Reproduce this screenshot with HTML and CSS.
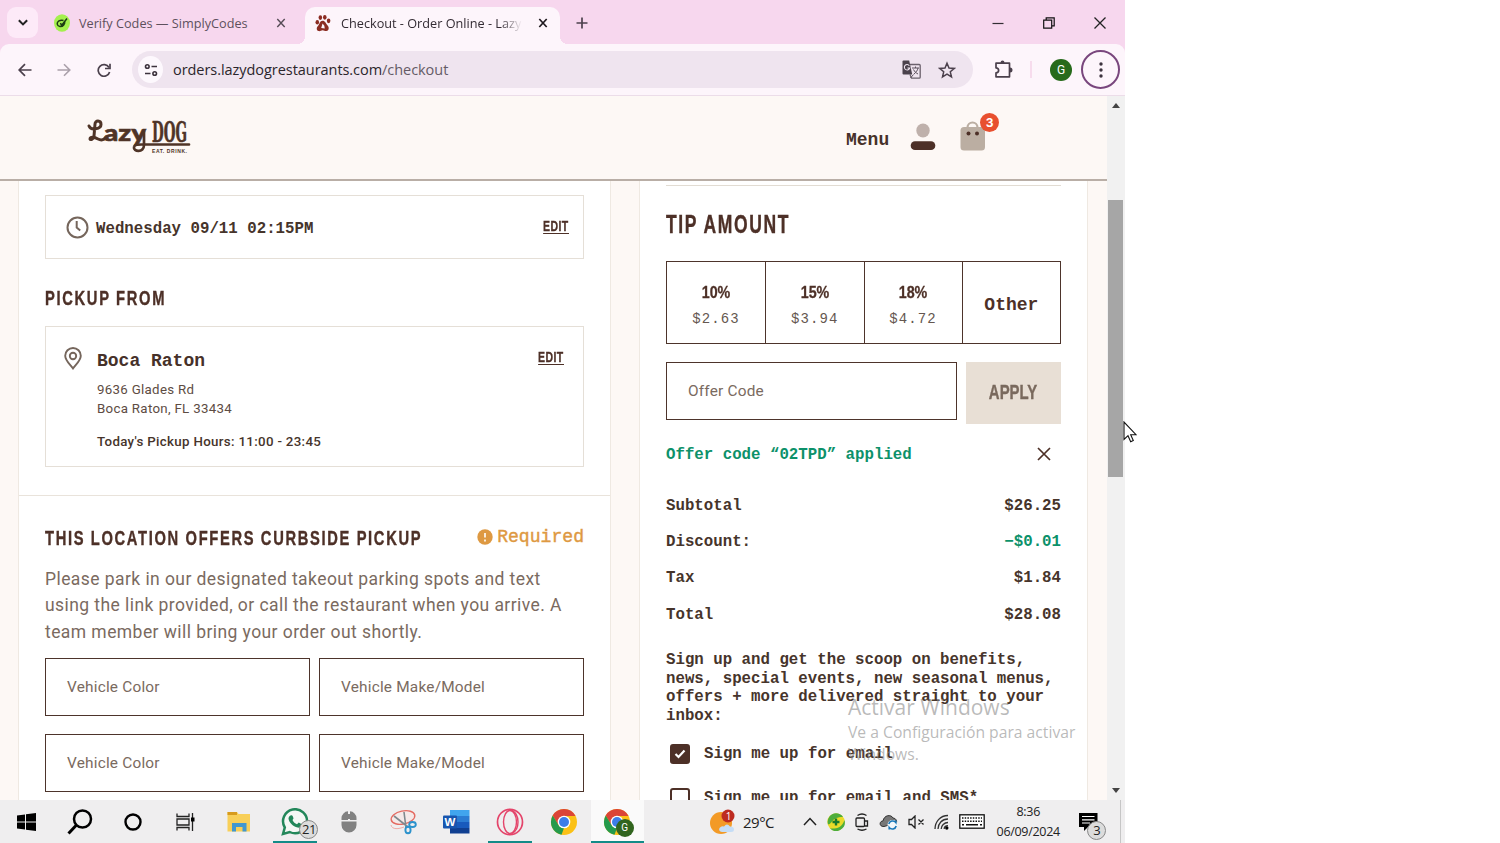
FILE: index.html
```
<!DOCTYPE html>
<html lang="en">
<head>
    <meta charset="UTF-8">
    <meta name="viewport" content="width=device-width, initial-scale=1.0">
    <title>Checkout - Order Online - Lazy Dog</title>
    <link rel="stylesheet" href="styles.css">
</head>
<body>
<div class="desktop">
    <!-- Browser tabs -->
    <div class="tabs">
        <div class="tab-search"><svg width="12" height="9" viewBox="0 0 10 8"><path d="M1.3 2 5 5.7 8.7 2" fill="none" stroke="#222" stroke-width="1.800"/></svg></div>
        <div class="tab">
            <svg width="16" height="18" viewBox="0 0 16 18"><ellipse cx="8" cy="9" rx="8" ry="8.7" fill="#a4f04e"/><path d="M13 4.500 7.500 11.500 6.500 9M9.500 6.500C6 5.500 3 7.500 3.200 10c.5 3 4.500 3.500 6.500 1 1-1.300 1.200-2 1-3" fill="none" stroke="#1d3d12" stroke-width="1.500"/></svg>
            <span class="tab-title">Verify Codes — SimplyCodes</span>
            <svg class="tab-close" width="10" height="10" viewBox="0 0 10 10"><path d="m1.300 1 7.400 8M8.700 1l-7.400 8" stroke="#554b55" stroke-width="1.4"/></svg>
        </div>
        <div class="tab active">
            <svg width="16" height="19" viewBox="0 0 18 20"><g fill="#8b2c22"><ellipse cx="2.600" cy="8.500" rx="2" ry="2.500"/><ellipse cx="6" cy="3.300" rx="2" ry="2.700"/><ellipse cx="11" cy="3" rx="2" ry="2.700"/><ellipse cx="15.300" cy="7" rx="2" ry="2.600"/><path d="M8.500 7c3 0 3.500 3 5.500 5 2.500 2.500 1.500 6.500-1.200 6.500-2 0-2.500-1-4.300-1-1.700 0-2.500 1.500-4.500 1-2.600-.7-2.600-4-.5-6C5.500 10.500 5.500 7 8.500 7z"/></g><path d="m7 15 1.500-5 2 2.500.5 3z" fill="#fdf5fb"/></svg>
            <span class="tab-title title-active">Checkout - Order Online - Lazy</span>
            <svg class="tab-close" width="10" height="10" viewBox="0 0 10 10"><path d="m1.300 1 7.400 8M8.700 1l-7.400 8" stroke="#1f1a1f" stroke-width="1.7"/></svg>
        </div>
        <svg class="new-tab" width="12" height="12" viewBox="0 0 12 12"><path d="M6 .5v11M.5 6h11" stroke="#4d424d" stroke-width="1.7"/></svg>
        <div class="window-buttons">
            <svg width="12" height="12" viewBox="0 0 12 12"><path d="M.5 6.500h11" stroke="#332d33" stroke-width="1.200"/></svg>
            <svg width="12" height="12" viewBox="0 0 12 12"><path d="M.7 3.200h8v8h-8zM3.200 3V.8h8v8H9" fill="none" stroke="#111" stroke-width="1.200"/></svg>
            <svg width="12" height="12" viewBox="0 0 12 12"><path d="m.5.5 11 11M11.500.5l-11 11" stroke="#222" stroke-width="1.300"/></svg>
        </div>
    </div>

    <!-- Address bar -->
    <div class="toolbar-back">
    <div class="toolbar">
        <svg class="nav-back" width="14" height="14" viewBox="0 0 14 14"><path d="M13.500 7H1.500M7 1.200 1.200 7 7 12.800" fill="none" stroke="#4b404c" stroke-width="1.700"/></svg>
        <svg class="nav-next" width="14" height="14" viewBox="0 0 14 14"><path d="M.5 7h12M7 1.200 12.800 7 7 12.800" fill="none" stroke="#aaa0aa" stroke-width="1.600"/></svg>
        <svg class="nav-reload" width="14" height="14" viewBox="0 0 14 14"><path d="M12 4.500A5.800 5.800 0 1 0 12.600 9" fill="none" stroke="#4b404c" stroke-width="1.700"/><path d="M13 .7v4.800H8" fill="none" stroke="#4b404c" stroke-width="1.700"/></svg>
        <div class="address">
            <div class="site-info"><svg width="14" height="14" viewBox="0 0 14 14"><g fill="none" stroke="#3d333e" stroke-width="1.600"><circle cx="3.300" cy="3.500" r="1.800"/><path d="M7.500 3.500H13M1 10.500h5.500"/><circle cx="10.700" cy="10.500" r="1.800"/></g></svg></div>
            <span class="url">orders.lazydogrestaurants.com<span class="path">/checkout</span></span>
            <svg class="translate" width="19" height="19" viewBox="0 0 19 19"><path d="M8 4.500h9.200q1 0 1 1v11.700q0 1-1 1H9.500L8 14.500" fill="none" stroke="#6b616c" stroke-width="1.300"/><path d="M1.500.5h5.700l3 14H1.500q-1 0-1-1v-12q0-1 1-1z" fill="#4b424c"/><path d="M7.300 5.700A2.700 2.700 0 1 0 7.700 8H5.400" fill="none" stroke="#efe5f0" stroke-width="1.100"/><path d="M10 8h7M13.500 6.500V8M16 8c-.5 2.500-2 4.500-4 6M11.500 9.500c1 2 2.500 3.500 4.500 4.500M8.500 18l3-3.500" fill="none" stroke="#5b515c" stroke-width="1"/></svg>
            <svg class="star" width="18" height="18" viewBox="0 0 18 18"><path d="m9 2.200 2 4.800 5.300.4-4 3.400 1.200 5.200L9 13.200 4.500 16l1.200-5.200-4-3.400L7 7z" fill="none" stroke="#4b404c" stroke-width="1.500"/></svg>
        </div>
        <svg class="puzzle" width="19" height="19" viewBox="0 0 19 19"><path d="M2 3.200h13.500v13.600H2v-4c3.500 0 3.500-5 0-5z" fill="none" stroke="#4b404c" stroke-width="1.700" stroke-linejoin="round"/><path d="M6.500 3a2 2.400 0 0 1 4 0zM16 7.500a2.400 2.400 0 0 1 0 5z" fill="#4b404c"/></svg>
        <span class="tool-divider"></span>
        <span class="profile">G</span>
        <span class="more"><svg width="4" height="16" viewBox="0 0 4 16"><g fill="#3d333e"><circle cx="2" cy="2" r="1.700"/><circle cx="2" cy="8" r="1.700"/><circle cx="2" cy="14" r="1.700"/></g></svg></span>
    </div>
    </div>

    <div class="viewport">
        <div class="page">
            <header class="site-header">
                <svg class="logo" width="104" height="36" viewBox="0 0 104 36">
                    <g fill="#4f3427" stroke="#4f3427" stroke-width=".6">
                        <text x="17" y="21.500" font-family="Lato" font-weight="900" font-size="23" textLength="42" lengthAdjust="spacingAndGlyphs">azy</text>
                        <text x="65" y="22.500" font-family="DejaVu Serif" font-weight="bold" font-size="27" textLength="35" lengthAdjust="spacingAndGlyphs">DOG</text>
                        <text x="65" y="34" font-family="Liberation Sans" font-weight="bold" font-size="5" textLength="35" stroke="none">EAT. DRINK.</text>
                    </g>
                    <g fill="none" stroke="#4f3427" stroke-width="3" stroke-linecap="round">
                        <path d="M2 7c2 5 12 3 12-1.500C14 1 8 1 8 5L7 17c-.5 3-3.500 4.500-4 3 0-3 5-1.500 8 0 3 1.500 6 1 7-1"/>
                        <path d="M57 12v14c0 8-11 7-10 2 .5-3 5-2.500 11-2.500h44" stroke-width="2.700"/>
                    </g>
                </svg>
                <span class="menu-link">Menu</span>
                <svg class="user" width="26" height="28" viewBox="0 0 26 28"><ellipse cx="13" cy="7.500" rx="6.700" ry="7" fill="#bfb1ab"/><rect x=".7" y="18.300" width="24.600" height="8.700" rx="4.300" fill="#4d3027"/></svg>
                <div class="bag">
                    <svg width="26" height="30" viewBox="0 0 26 30"><path d="M7.500 8V6.500a5 5 0 0 1 10 0V8" fill="none" stroke="#bbaea2" stroke-width="2.200"/><rect x=".5" y="6" width="24.500" height="23.500" rx="3.500" fill="#bbaea2"/><circle cx="8.500" cy="12.500" r="2" fill="#4d3027"/><circle cx="17" cy="12.500" r="2" fill="#4d3027"/></svg>
                    <span class="bag-count">3</span>
                </div>
            </header>

            <main class="columns">
                <section class="panel pickup">
                    <div class="box time-box">
                        <svg width="23" height="23" viewBox="0 0 23 23"><g fill="none" stroke="#75665c" stroke-width="2"><circle cx="11.500" cy="11.500" r="10"/><path d="M10.700 5v6.500l3.500 3"/></g></svg>
                        <span class="mono">Wednesday 09/11 02:15PM</span>
                        <a class="edit">EDIT</a>
                    </div>
                    <h2 class="h-pickup">PICKUP FROM</h2>
                    <div class="box place-box">
                        <svg width="18" height="23" viewBox="0 0 18 23"><g fill="none" stroke="#75665c" stroke-width="1.900"><path d="M9 21.500C6 17.500 1.200 13.500 1.200 8.800a7.800 7.800 0 0 1 15.600 0C16.800 13.500 12 17.500 9 21.500z"/><circle cx="9" cy="9" r="3.200"/></g></svg>
                        <div class="place">
                            <h3>Boca Raton</h3>
                            <p>9636 Glades Rd</p>
                            <p>Boca Raton, FL 33434</p>
                            <p class="hours">Today's Pickup Hours: 11:00 - 23:45</p>
                        </div>
                        <a class="edit">EDIT</a>
                    </div>
                    <div class="curb">
                        <div class="curb-head">
                            <h2 class="h-curb">THIS LOCATION OFFERS CURBSIDE PICKUP</h2>
                            <span class="required"><svg width="16" height="16" viewBox="0 0 16 16"><circle cx="8" cy="8" r="7.700" fill="#de9942"/><path d="M8 4v4.500M8 10.500v2" stroke="#fff" stroke-width="1.600"/></svg>Required</span>
                        </div>
                        <p class="note">Please park in our designated takeout parking spots and text<br>using the link provided, or call the restaurant when you arrive. A<br>team member will bring your order out shortly.</p>
                        <div class="fields">
                            <div class="field">Vehicle Color</div>
                            <div class="field">Vehicle Make/Model</div>
                            <div class="field">Vehicle Color</div>
                            <div class="field">Vehicle Make/Model</div>
                        </div>
                    </div>
                </section>

                <section class="panel summary">
                    <h2 class="h-tip">TIP AMOUNT</h2>
                    <div class="tips">
                        <div class="tip"><b>10%</b><span>$2.63</span></div>
                        <div class="tip"><b>15%</b><span>$3.94</span></div>
                        <div class="tip"><b>18%</b><span>$4.72</span></div>
                        <div class="tip other">Other</div>
                    </div>
                    <div class="offer">
                        <div class="field">Offer Code</div>
                        <div class="apply"><span>APPLY</span></div>
                    </div>
                    <div class="applied mono">
                        <span>Offer code “02TPD” applied</span>
                        <svg width="14" height="14" viewBox="0 0 14 14"><path d="m1 1 12 12M13 1 1 13" stroke="#4d3027" stroke-width="1.700"/></svg>
                    </div>
                    <div class="totals mono">
                        <div class="line"><span>Subtotal</span><span>$26.25</span></div>
                        <div class="line"><span>Discount:</span><span class="green">−$0.01</span></div>
                        <div class="line"><span>Tax</span><span>$1.84</span></div>
                        <div class="line"><span>Total</span><span>$28.08</span></div>
                    </div>
                    <p class="signup mono">Sign up and get the scoop on benefits,<br>news, special events, new seasonal menus,<br>offers + more delivered straight to your<br>inbox:</p>
                    <div class="check mono"><span class="tick checked"><svg width="12" height="10" viewBox="0 0 12 10"><path d="m1.500 5 3 3 6-6.500" fill="none" stroke="#fff" stroke-width="2.200"/></svg></span>Sign me up for email</div>
                    <div class="check mono"><span class="tick"></span>Sign me up for email and SMS*</div>
                </section>
            </main>
        </div>
        <div class="scrollbar">
            <span class="arrow-up"></span>
            <span class="thumb"></span>
            <span class="arrow-down"></span>
        </div>
    </div>

    <!-- Windows taskbar -->
    <div class="taskbar">
        <div class="apps">
            <div class="app"><svg width="19" height="18" viewBox="0 0 19 18"><path d="M0 2.600 8 1.500v7H0zM9 1.300 19 0v8.500H9zM0 9.500h8v7l-8-1.100zM9 9.500h10V18L9 16.700z"/></svg></div>
            <div class="app"><svg width="26" height="26" viewBox="0 0 26 26"><circle cx="15.500" cy="10" r="8.500" fill="none" stroke="#000" stroke-width="2.500"/><path d="m9.500 16-8 8.500" stroke="#000" stroke-width="3"/></svg></div>
            <div class="app"><svg width="18" height="18" viewBox="0 0 18 18"><circle cx="9" cy="9" r="7.500" fill="none" stroke="#000" stroke-width="2.400"/></svg></div>
            <div class="app"><svg width="19" height="18" viewBox="0 0 19 18"><path d="M1 .5v3h12v-3M1 17.500v-3h12v3M1 6h12v6H1zM16.500 0v18" fill="none" stroke="#222" stroke-width="1.300"/><path d="M15 4.500h3.500v4H15z"/></svg></div>
            <div class="app"><svg width="24" height="20" viewBox="0 0 24 20"><path d="M.5 0H10l1.500 2H23v17.500H.5z" fill="#f8cf59"/><path d="M.5 0H10v3H.5z" fill="#d79b1e"/><path d="M5 19.500V11h14.500v8.500h-4V15h-6.500v4.500z" fill="#4197cf"/></svg></div>
            <div class="app whatsapp open"><svg width="28" height="28" viewBox="0 0 28 28"><path d="M2 26 3.800 19.500A12 12 0 1 1 8.700 24z" fill="#f5f8f5" stroke="#23875a" stroke-width="2.500"/><path d="M9.500 7.500c2-1 2.500 1 3 3l-1 1.500c1 2.200 2.500 3.500 4.500 4.300l1.700-1.700 3.500 2c0 2.500-2.500 3.500-4.500 3-5-1.200-8.700-5-9.200-9 0-1.300.8-2.500 2-3.100z" fill="#23875a"/></svg><span class="count">21</span></div>
            <div class="app"><svg width="16" height="22" viewBox="0 0 16 22"><path d="M.5 9V7A7 7 0 0 1 7 .3V9zM9 .3A7 7 0 0 1 15.500 7v2H9zM.5 10.500h15V14a7.500 7.500 0 0 1-15 0z" fill="#818181"/><rect x="7" y="3" width="2" height="5" fill="#818181"/></svg></div>
            <div class="app"><svg width="28" height="26" viewBox="0 0 28 26"><ellipse cx="14" cy="8.500" rx="12" ry="6.500" fill="#f5e9e8" stroke="#e46b62" stroke-width="1.400" transform="rotate(-12 14 8.500)"/><path d="M2 16c1 5 8 4 13 2" fill="none" stroke="#f0aaa5"/><path d="m5 7 14 11M15 3l2 16" stroke="#7f898e" stroke-width="1.600"/><ellipse cx="23.500" cy="15.500" rx="3.300" ry="2.500" fill="none" stroke="#2c92cc" stroke-width="1.900"/><ellipse cx="19" cy="21" rx="2.600" ry="3.300" fill="none" stroke="#2c92cc" stroke-width="1.900"/></svg></div>
            <div class="app"><svg width="27" height="24" viewBox="0 0 27 24"><path d="M7 0h19.500v6H7z" fill="#41a5ee"/><path d="M7 6h19.500v6H7z" fill="#2b7cd3"/><path d="M7 12h19.500v6H7z" fill="#185abd"/><path d="M7 18h19.500v5.500H7z" fill="#103f91"/><rect y="5.500" width="14" height="13" rx="1" fill="#1855ae"/><text x="1.500" y="16" font-family="Liberation Sans" font-weight="bold" font-size="11.500" fill="#fff">W</text></svg></div>
            <div class="app open"><svg width="28" height="28" viewBox="0 0 28 28"><g fill="none" stroke="#e4446a"><ellipse cx="14" cy="14" rx="12.500" ry="12.700" stroke-width="1.700"/><ellipse cx="14" cy="14" rx="6.500" ry="11.500" stroke-width="1.400"/><path d="M16 2.500c8 4 8 19 0 23" stroke-width="1.400"/></g></svg></div>
            <div class="app"><svg width="28" height="28" viewBox="0 0 28 28"><circle cx="14" cy="14" r="13" fill="#fbc116"/><path d="M2.700 7.500A13 13 0 0 1 25.500 8H14L8.500 17z" fill="#db4437"/><path d="M2.700 7.500 8.800 17.500 14 20l-2.500 6.800A13 13 0 0 1 2.700 7.500z" fill="#249a4c"/><circle cx="14" cy="14" r="6.300" fill="#fff"/><circle cx="14" cy="14" r="5" fill="#3d7de8"/></svg></div>
            <div class="app open current"><svg width="28" height="28" viewBox="0 0 28 28"><circle cx="14" cy="14" r="13" fill="#fbc116"/><path d="M2.700 7.500A13 13 0 0 1 25.500 8H14L8.500 17z" fill="#db4437"/><path d="M2.700 7.500 8.800 17.500 14 20l-2.500 6.800A13 13 0 0 1 2.700 7.500z" fill="#249a4c"/><circle cx="14" cy="14" r="6.300" fill="#fff"/><circle cx="14" cy="14" r="5" fill="#3d7de8"/></svg><span class="chrome-user">G</span></div>
        </div>
        <div class="weather">
            <svg width="25" height="26" viewBox="0 0 25 26"><circle cx="11" cy="14" r="11" fill="#f39a26"/><path d="M12 23q-4-1-2.500-4 2-2.500 4.500-1.500 3-4 6 0 4 0 4 3 0 2.500-3 2.500z" fill="#c5ddf6"/><circle cx="18" cy="7" r="6.500" fill="#bd2b20"/><text x="15.700" y="10.500" font-family="Open Sans" font-size="10" fill="#fff">1</text></svg>
            <span>29°C</span>
        </div>
        <div class="tray">
            <svg width="14" height="9" viewBox="0 0 14 9"><path d="m1 8 6-6.500L13 8" fill="none" stroke="#222" stroke-width="1.500"/></svg>
            <svg width="18" height="18" viewBox="0 0 18 18"><circle cx="9" cy="9" r="8.700" fill="#eadb29"/><path d="M9 .3a8.700 8.700 0 0 0-8 11C6 11 4 4 16 4A8.700 8.700 0 0 0 9 .3zM3 15.500A8.700 8.700 0 0 0 17.500 7C15 15 9 16 3 15.500z" fill="#4dad3c"/><path d="M9 5.500v7M5.500 9h7" stroke="#187a2c" stroke-width="2.400"/></svg>
            <svg width="14" height="18" viewBox="0 0 14 18"><g fill="none" stroke="#222" stroke-width="1.300"><rect x="1" y="5" width="8.500" height="8.500" rx="1"/><path d="M9.500 8h3v5h-3M2.500 2.500q4.500-3 9 0M2.500 16q4.500 2.500 9 0"/></g></svg>
            <svg width="19" height="16" viewBox="0 0 19 16"><path d="M5 12.500C0 13 0 7 4 7c1-6 8-7 10-3 3 0 4 3 3.500 5z" fill="#777" stroke="#333"/><circle cx="13.500" cy="11" r="5" fill="#f4f8fb"/><path d="M9.800 10a4 4 0 0 1 7-1.500V6.500M17.200 12a4 4 0 0 1-7 1.500v2" fill="none" stroke="#1877b8" stroke-width="1.600"/></svg>
            <svg width="17" height="14" viewBox="0 0 17 14"><path d="M1 4.500h2.500L7 1v12L3.500 9.500H1zM10.500 4.500l5 5M15.500 4.500l-5 5" fill="none" stroke="#222" stroke-width="1.300"/></svg>
            <svg class="wifi" width="15" height="16" viewBox="0 0 15 16"><g fill="none" stroke="#333" stroke-width="1.300"><path d="M1 15C1 8 6 1.500 14 1.500M4 15c0-5.500 4-10 10-10M7.200 15c0-3.500 3-6.500 6.800-6.500M10.200 15c0-2 1.800-3.300 3.800-3.300"/></g><circle cx="12.800" cy="14" r="1.700"/></svg>
            <svg width="26" height="15" viewBox="0 0 26 15"><rect x=".8" y=".8" width="24.400" height="13.400" fill="#fff" stroke="#111" stroke-width="1.300"/><path d="M3 4h20M3 7.300h20" stroke="#111" stroke-width="1.400" stroke-dasharray="1.500 1.200"/><path d="M3 10.800h2M7 10.800h12M21 10.800h2" stroke="#111" stroke-width="1.400"/></svg>
            <div class="clock"><span>8:36</span><span>06/09/2024</span></div>
            <div class="notices"><svg width="19" height="18" viewBox="0 0 19 18"><path d="M0 0h18.500v14H9l-4 4v-4H0z" fill="#000"/><path d="M3 3.500h12.500M3 6.800h12.500M3 10h8" stroke="#fff" stroke-width="1.200"/></svg><span class="count">3</span></div>
        </div>
    </div>

    <div class="watermark">
        <p class="big">Activar Windows</p>
        <p>Ve a Configuración para activar</p>
        <p>Windows.</p>
    </div>
    <svg class="cursor" width="14" height="22" viewBox="0 0 14 22"><path d="M1 1v17.500l4-3.800 2.700 6 2.600-1.200-2.600-5.800H13z" fill="#fff" stroke="#111" stroke-width="1.100"/></svg>
</div>
</body>
</html>
```
FILE: styles.css
```
* {
    box-sizing: border-box;
}

body {
    margin: 0;
    background: #fff;
    color: #4d3027;
    font-family: Roboto, sans-serif;
    overflow: hidden;
}

h2, h3, p {
    margin: 0;
}

svg {
    display: block;
    flex: none;
}

.logo {
    overflow: visible;
}

.desktop {
    position: relative;
    width: 1125px;
    height: 843px;
    font-size: 13px;
}

/* browser */
.tabs {
    display: flex;
    align-items: center;
    height: 44px;
    background: #f7d7ee;
    font-family: "Open Sans", sans-serif;
}

.tab-search {
    display: flex;
    align-items: center;
    justify-content: center;
    width: 31px;
    height: 31px;
    margin-left: 7px;
    border-radius: 9px;
    background: #fdeaf8;
}

.tab {
    display: flex;
    align-items: center;
    width: 252px;
    height: 37px;
    padding: 2px 4px 0 16px;
    color: #5d505d;
}

.tab.active {
    position: relative;
    align-self: flex-end;
    width: 255px;
    padding: 0 12px 5px 10px;
    margin-left: 15px;
    border-radius: 10px 10px 0 0;
    background: #fdf5fb;
    color: #332b33;
}

.tab.active::before,
.tab.active::after {
    content: "";
    position: absolute;
    bottom: 0;
    width: 8px;
    height: 8px;
}

.tab.active::before {
    left: -8px;
    background: radial-gradient(circle at 0 0, transparent 8px, #fdf5fb 8px);
}

.tab.active::after {
    right: -8px;
    background: radial-gradient(circle at 100% 0, transparent 8px, #fdf5fb 8px);
}

.tab-title {
    margin-left: 9px;
    font-size: 12.7px;
    white-space: nowrap;
}

.title-active {
    width: 181px;
    margin-left: 10px;
    overflow: hidden;
    -webkit-mask-image: linear-gradient(90deg, #000 88%, transparent);
    mask-image: linear-gradient(90deg, #000 88%, transparent);
}

.tab-close {
    margin-left: auto;
}

.new-tab {
    margin-left: 16px;
    margin-top: 2px;
}

.window-buttons {
    display: flex;
    gap: 39px;
    margin: 1px 19px 0 auto;
}

.toolbar-back {
    background: #f7d7ee;
}

.toolbar {
    display: flex;
    align-items: center;
    height: 52px;
    padding-right: 5px;
    border-bottom: 1px solid #ecdde9;
    border-radius: 9px 9px 0 0;
    background: #fdf5fb;
}

.nav-back {
    margin-left: 18px;
}

.nav-next {
    margin-left: 25px;
}

.nav-reload {
    margin-left: 26px;
}

.address {
    display: flex;
    align-items: center;
    width: 841px;
    height: 37px;
    margin-left: 21px;
    padding: 0 17px 0 6px;
    border-radius: 19px;
    background: #efe4ef;
}

.site-info {
    display: flex;
    align-items: center;
    justify-content: center;
    width: 25px;
    height: 27px;
    border-radius: 50%;
    background: #fdf8fd;
}

.url {
    margin-left: 10px;
    color: #2b262b;
    font-family: "Open Sans", sans-serif;
    font-size: 14.5px;
    letter-spacing: -0.05px;
}

.path {
    color: #655b66;
}

.translate {
    margin-left: auto;
}

.star {
    margin-left: 17px;
}

.puzzle {
    margin-left: 21px;
}

.tool-divider {
    width: 2px;
    height: 17px;
    margin-left: 17px;
    background: #f7dced;
}

.profile {
    width: 22px;
    height: 22px;
    margin-left: 18px;
    border-radius: 50%;
    background: #276a1b;
    color: #fff;
    font-size: 12px;
    line-height: 22px;
    text-align: center;
}

.more {
    display: flex;
    align-items: center;
    justify-content: center;
    width: 39px;
    height: 39px;
    margin-left: auto;
    border: 2px solid #79467d;
    border-radius: 50%;
}

.viewport {
    display: flex;
    height: 704px;
}

.page {
    width: 1107px;
    overflow: hidden;
    background: #fdf8f5;
}

.scrollbar {
    display: flex;
    flex-direction: column;
    align-items: center;
    width: 18px;
    padding: 7px 2px 7px 1px;
    background: #f1f1f1;
}

.arrow-up,
.arrow-down {
    border: 4px solid transparent;
    border-top-width: 0;
    border-bottom: 5px solid #444;
}

.thumb {
    width: 15px;
    height: 277px;
    margin-top: 92px;
    background: #a6a6a6;
}

.arrow-down {
    margin-top: auto;
    border-top: 5px solid #444;
    border-bottom-width: 0;
}

/* site header */
.site-header {
    display: flex;
    height: 85px;
    padding-left: 87px;
    border-bottom: 2px solid #b9aea6;
}

.logo {
    margin-top: 23px;
}

.menu-link {
    width: 44px;
    margin: 33px 0 0 655px;
    color: #463129;
    font: bold 18px/22px "Liberation Mono", monospace;
}

.user {
    margin: 27px 0 0 20px;
}

.bag {
    position: relative;
    margin: 25px 0 0 24px;
}

.bag-count {
    position: absolute;
    top: -8px;
    left: 20px;
    width: 19px;
    height: 19px;
    border-radius: 50%;
    background: #e8502f;
    color: #fff;
    font: bold 12px/19px Inter, sans-serif;
    text-align: center;
}

/* checkout */
.columns {
    display: flex;
    gap: 28px;
    height: 619px;
    padding-left: 18px;
}

.panel {
    padding: 0 26px;
    border: 1px solid #efe9e2;
    border-width: 0 1px;
    background: #fff;
}

.pickup {
    width: 593px;
}

.summary {
    width: 449px;
}

.box {
    display: flex;
    border: 1px solid #e5dfd7;
}

.mono {
    color: #46342b;
    font: bold 15.75px/20px "Liberation Mono", monospace;
}

h2 {
    font-family: "Liberation Sans", sans-serif;
    font-weight: bold;
    white-space: nowrap;
    transform-origin: 0 50%;
    transform: scaleX(0.7);
    -webkit-text-stroke: 0.4px;
}

.edit {
    width: 37px;
    height: 17px;
    margin-left: auto;
    border-bottom: 1px solid #4d3027;
    font: bold 15px/17px "Liberation Sans", sans-serif;
    letter-spacing: 0.6px;
    transform: scaleX(0.7);
    transform-origin: 100% 50%;
    -webkit-text-stroke: 0.3px;
}

.time-box {
    align-items: center;
    height: 64px;
    margin-top: 14px;
    padding: 0 14px 0 20px;
}

.time-box .mono {
    margin: 4px 0 0 7px;
}

.time-box .edit {
    margin-top: -3px;
}

.h-pickup {
    height: 24px;
    margin-top: 27px;
    font-size: 21px;
    line-height: 24px;
    letter-spacing: 2.4px;
}

.place-box {
    height: 141px;
    margin-top: 16px;
    padding: 20px 19px 0 18px;
}

.place {
    margin-left: 15px;
}

.place-box .edit {
    margin-top: 1px;
}

.place h3 {
    margin: 3px 0 8px;
    color: #463129;
    font: bold 18px/22px "Liberation Mono", monospace;
}

.place p {
    color: #5d4c43;
    font-size: 13.3px;
    line-height: 19px;
    letter-spacing: 0.3px;
}

.place .hours {
    margin-top: 14px;
    color: #46342b;
    font-weight: 500;
    letter-spacing: 0.32px;
}

.curb {
    margin: 28px -26px 0;
    padding: 28px 26px 0;
    border-top: 1px solid #e9e3db;
}

.curb-head {
    display: flex;
    justify-content: space-between;
    height: 26px;
}

.h-curb {
    width: 380px;
    font-size: 21px;
    line-height: 27px;
    letter-spacing: 2.37px;
}

.required {
    display: flex;
    align-items: center;
    gap: 4px;
    height: 25px;
    color: #de9942;
    font: 18.100px/24px "Liberation Mono", monospace;
    -webkit-text-stroke: 0.4px;
}

.note {
    margin-top: 16px;
    color: #7a6a60;
    font-size: 17.500px;
    line-height: 26.300px;
    letter-spacing: 0.43px;
    white-space: nowrap;
}

.fields {
    display: grid;
    grid-template-columns: 265px 265px;
    gap: 18px 9px;
    margin-top: 13px;
}

.field {
    height: 58px;
    padding-left: 21px;
    border: 1px solid #4d342b;
    color: #7a6a60;
    font-size: 15.4px;
    line-height: 56px;
    letter-spacing: 0.2px;
}

/* order summary */
.summary::before {
    content: "";
    display: block;
    height: 5px;
    margin-top: -1px;
    border-bottom: 1px solid #e2dcd3;
}

.summary {
    padding-top: 0.1px;
}

.h-tip {
    height: 30px;
    margin-top: 23px;
    font-size: 25px;
    line-height: 30px;
    letter-spacing: 2.3px;
}

.tips {
    display: grid;
    grid-template-columns: repeat(4, 1fr);
    height: 83px;
    margin-top: 22px;
    border: 1px solid #4d342b;
}

.tip {
    display: flex;
    flex-direction: column;
    align-items: center;
    padding-top: 20px;
    border-left: 1px solid #4d342b;
}

.tip:first-child {
    border-left: 0;
}

.tip b {
    font: bold 17px/22px "Liberation Sans", sans-serif;
    transform: scaleX(0.84);
    -webkit-text-stroke: 0.3px;
}

.tip span {
    margin-top: 5px;
    color: #655750;
    font: 14px/20px "Liberation Mono", monospace;
    letter-spacing: 1.100px;
}

.tip.other {
    justify-content: center;
    padding: 5px 0 0;
    font: bold 18px/22px "Liberation Mono", monospace;
}

.offer {
    display: flex;
    justify-content: space-between;
    margin-top: 18px;
}

.offer .field {
    width: 291px;
}

.apply {
    display: flex;
    align-items: center;
    justify-content: center;
    width: 95px;
    height: 62px;
    padding-bottom: 3px;
    background: #e8dfd5;
    color: #79695d;
    font: bold 21px/59px "Liberation Sans", sans-serif;
}

.apply span {
    transform: scaleX(0.71);
    -webkit-text-stroke: 0.4px;
}

.applied {
    display: flex;
    align-items: center;
    justify-content: space-between;
    height: 20px;
    margin-top: 20px;
    padding-right: 10px;
    color: #0c916a;
}

.applied span {
    padding-top: 2px;
}

.totals {
    margin-top: 24px;
}

.line {
    display: flex;
    justify-content: space-between;
    height: 36.200px;
    line-height: 36px;
}

.green {
    color: #0c916a;
}

.signup {
    margin-top: 18px;
    line-height: 18.700px;
    white-space: nowrap;
}

.check {
    display: flex;
    align-items: center;
    height: 20px;
    margin: 18px 0 0 4px;
}

.check + .check {
    margin-top: 24px;
}

.tick {
    display: flex;
    align-items: center;
    justify-content: center;
    width: 20px;
    height: 20px;
    margin-right: 14px;
    border: 2px solid #4d3027;
    border-radius: 3px;
}

.checked {
    background: #4d3027;
}

/* taskbar */
.taskbar {
    display: flex;
    width: 1121px;
    height: 43px;
    border-right: 1px solid #c6c6c6;
    background: #efeeef;
    box-shadow: 4px 0 #efeeef;
    color: #222;
    font-family: "Open Sans", sans-serif;
}

.apps {
    display: flex;
    width: 645px;
}

.app {
    position: relative;
    display: flex;
    align-items: center;
    justify-content: center;
    width: 53.700px;
    height: 43px;
}

.app:nth-child(-n+5) {
    width: 53.100px;
}

.app.whatsapp {
    margin-left: 3px;
}

.app.open::after {
    content: "";
    position: absolute;
    right: 5px;
    bottom: 0;
    left: 5px;
    height: 2px;
    background: #128b88;
}

.app.current {
    background: #fafafa;
}

.app.current::after {
    right: 0;
    left: 0;
}

.count {
    position: absolute;
    top: 20px;
    left: 31px;
    width: 19px;
    height: 19px;
    border: 1px solid #888;
    border-radius: 50%;
    background: #dcdcdc;
    font-size: 13px;
    line-height: 17px;
    letter-spacing: -0.5px;
    text-align: center;
}

.chrome-user {
    position: absolute;
    top: 19px;
    left: 25px;
    width: 18px;
    height: 18px;
    border-radius: 50%;
    background: #31651f;
    color: #fff;
    font: 10px/18px Roboto, sans-serif;
    text-align: center;
}

.weather {
    display: flex;
    align-items: center;
    gap: 8px;
    width: 93px;
    margin-left: 65px;
    font-size: 15px;
    letter-spacing: -0.5px;
}

.tray {
    display: flex;
    align-items: center;
    gap: 9.900px;
}

.clock {
    display: flex;
    flex-direction: column;
    align-items: center;
    width: 66px;
    font-size: 12.500px;
    line-height: 20px;
    letter-spacing: -0.3px;
    white-space: nowrap;
}

.notices {
    position: relative;
    margin-left: 8px;
}

.notices .count {
    top: 8px;
    left: 8px;
}

/* things drawn over the windows */
.watermark {
    position: absolute;
    top: 693px;
    left: 848px;
    color: rgba(140, 140, 140, 0.6);
    font-family: "Open Sans", sans-serif;
    font-size: 15.700px;
    line-height: 22px;
    white-space: nowrap;
}

.watermark .big {
    font-size: 21px;
    line-height: 28px;
}

.cursor {
    position: absolute;
    top: 421px;
    left: 1123px;
}
```
